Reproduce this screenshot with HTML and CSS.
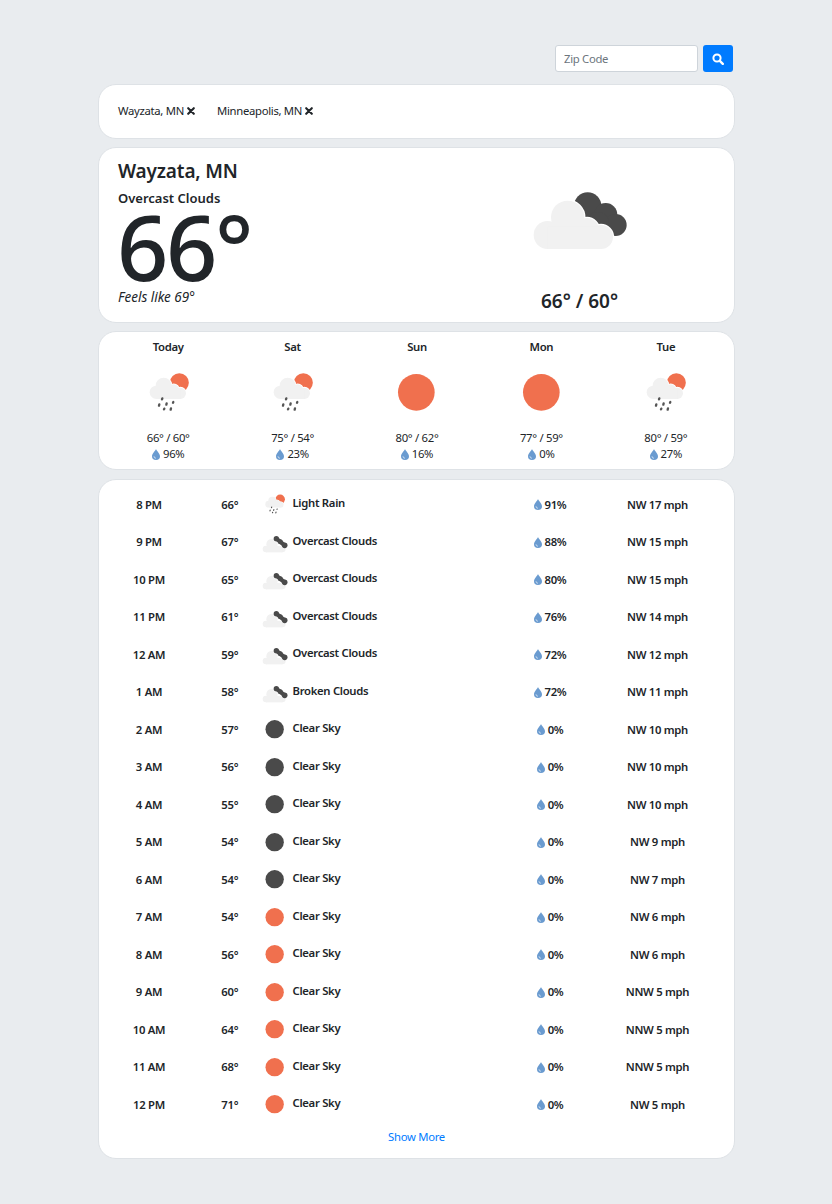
FILE: index.html
```html
<!DOCTYPE html>
<html lang="en">
<head>
    <meta charset="UTF-8">
    <meta name="viewport" content="width=device-width, initial-scale=1.0">
    <title>Weather</title>
    <link rel="stylesheet" href="styles.css">
</head>
<body>
    <svg class="defs" width="0" height="0">
        <defs>
            <g id="big-cloud">
                <circle cx="112" cy="195" r="42"/><circle cx="172" cy="142" r="50"/><circle cx="230" cy="180" r="36"/><circle cx="272" cy="201" r="36"/><rect x="112" y="170" width="160" height="67"/>
            </g>
            <g id="rain-cloud">
                <circle cx="46" cy="67" r="20"/><circle cx="68" cy="47" r="24"/><circle cx="98" cy="59" r="16"/><circle cx="118" cy="70" r="17"/><rect x="46" y="60" width="72" height="27"/>
            </g>
            <symbol id="i-overcast" viewBox="14 0 390 270">
                <g fill="#4a4a4a">
                    <circle cx="232" cy="108" r="41"/><circle cx="286" cy="134" r="35"/><circle cx="316" cy="165" r="33"/><circle cx="262" cy="160" r="34"/>
                </g>
                <use href="#big-cloud" fill="#fff" stroke="#fff" stroke-width="7"/>
                <use href="#big-cloud" fill="#f1f1f1"/>
            </symbol>
            <symbol id="i-rain" viewBox="0 0 165 165">
                <circle cx="115" cy="38" r="28.500" fill="#f0704e"/>
                <use href="#rain-cloud" fill="#fff" stroke="#fff" stroke-width="5"/>
                <use href="#rain-cloud" fill="#f1f1f1"/>
                <path d="M64 85l-1 3M55 103l-1 4M77 100l-1 4M97 96l-1 2M70 116l-1 2M90 115l-1 4" stroke="#555" stroke-width="7" stroke-linecap="round"/>
            </symbol>
            <symbol id="i-sun" viewBox="0 0 165 165">
                <circle cx="82" cy="67" r="55" fill="#f0704e"/>
            </symbol>
            <symbol id="i-moon" viewBox="0 0 165 165">
                <circle cx="82" cy="67" r="55" fill="#4a4a4a"/>
            </symbol>
            <symbol id="i-cloud-small" viewBox="0 0 165 165">
                <g fill="#f1f1f1">
                    <circle cx="30" cy="108" r="20"/><circle cx="66" cy="80" r="34"/><circle cx="128" cy="108" r="20"/><rect x="30" y="90" width="98" height="38"/>
                </g>
                <path d="M92 46L142 86" stroke="#4a4a4a" stroke-width="24"/>
                <g fill="#4a4a4a">
                    <circle cx="92" cy="46" r="16"/><circle cx="116" cy="64" r="15"/><circle cx="142" cy="86" r="17"/>
                </g>
            </symbol>
            <symbol id="i-drop" viewBox="0 0 16 22">
                <path d="M8 0C7 3 0 9 0 14.500A8 7.500 0 0 0 16 14.500C16 9 9 3 8 0Z" fill="#6a9bd0"/>
                <path d="M4 14.500a4 4 0 0 0 4 4" fill="none" stroke="#dbe7f4" stroke-width="1.600"/>
            </symbol>
            <symbol id="i-close" viewBox="0 0 10 10">
                <path d="M1.500 1.500l7 7M8.500 1.500l-7 7" stroke="#212529" stroke-width="2.600" stroke-linecap="round"/>
            </symbol>
        </defs>
    </svg>

    <div class="container">
        <div class="search">
            <input class="zip" type="text" placeholder="Zip Code">
            <button class="search-btn" type="button" aria-label="Search">
                <svg width="12" height="12" viewBox="0 0 12 12"><circle cx="5" cy="5" r="3.600" fill="none" stroke="#fff" stroke-width="2"/><path d="M7.800 7.800l3 3" stroke="#fff" stroke-width="2.400" stroke-linecap="round"/></svg>
            </button>
        </div>

        <div class="card saved">
            <span class="place">Wayzata, MN <svg class="close"><use href="#i-close"/></svg></span>
            <span class="place">Minneapolis, MN <svg class="close"><use href="#i-close"/></svg></span>
        </div>

        <div class="card current">
            <div class="current-left">
                <h1 class="city">Wayzata, MN</h1>
                <div class="desc">Overcast Clouds</div>
                <div class="temp">66°</div>
                <div class="feels">Feels like 69°</div>
            </div>
            <div class="current-right">
                <svg class="big-icon"><use href="#i-overcast"/></svg>
                <div class="hilo">66° / 60°</div>
            </div>
        </div>

        <div class="card days">
            <div class="day">
                <div class="day-name">Today</div>
                <svg class="day-icon"><use href="#i-rain"/></svg>
                <div>66° / 60°</div>
                <div class="precip"><svg class="drop"><use href="#i-drop"/></svg>96%</div>
            </div>
            <div class="day">
                <div class="day-name">Sat</div>
                <svg class="day-icon"><use href="#i-rain"/></svg>
                <div>75° / 54°</div>
                <div class="precip"><svg class="drop"><use href="#i-drop"/></svg>23%</div>
            </div>
            <div class="day">
                <div class="day-name">Sun</div>
                <svg class="day-icon"><use href="#i-sun"/></svg>
                <div>80° / 62°</div>
                <div class="precip"><svg class="drop"><use href="#i-drop"/></svg>16%</div>
            </div>
            <div class="day">
                <div class="day-name">Mon</div>
                <svg class="day-icon"><use href="#i-sun"/></svg>
                <div>77° / 59°</div>
                <div class="precip"><svg class="drop"><use href="#i-drop"/></svg>0%</div>
            </div>
            <div class="day">
                <div class="day-name">Tue</div>
                <svg class="day-icon"><use href="#i-rain"/></svg>
                <div>80° / 59°</div>
                <div class="precip"><svg class="drop"><use href="#i-drop"/></svg>27%</div>
            </div>
        </div>

        <div class="card hours">
            <div class="hour"><div>8 PM</div><div>66°</div><svg class="hour-icon"><use href="#i-rain"/></svg><div class="label">Light Rain</div><div class="precip"><svg class="drop"><use href="#i-drop"/></svg>91%</div><div>NW 17 mph</div></div>
            <div class="hour"><div>9 PM</div><div>67°</div><svg class="hour-icon"><use href="#i-cloud-small"/></svg><div class="label">Overcast Clouds</div><div class="precip"><svg class="drop"><use href="#i-drop"/></svg>88%</div><div>NW 15 mph</div></div>
            <div class="hour"><div>10 PM</div><div>65°</div><svg class="hour-icon"><use href="#i-cloud-small"/></svg><div class="label">Overcast Clouds</div><div class="precip"><svg class="drop"><use href="#i-drop"/></svg>80%</div><div>NW 15 mph</div></div>
            <div class="hour"><div>11 PM</div><div>61°</div><svg class="hour-icon"><use href="#i-cloud-small"/></svg><div class="label">Overcast Clouds</div><div class="precip"><svg class="drop"><use href="#i-drop"/></svg>76%</div><div>NW 14 mph</div></div>
            <div class="hour"><div>12 AM</div><div>59°</div><svg class="hour-icon"><use href="#i-cloud-small"/></svg><div class="label">Overcast Clouds</div><div class="precip"><svg class="drop"><use href="#i-drop"/></svg>72%</div><div>NW 12 mph</div></div>
            <div class="hour"><div>1 AM</div><div>58°</div><svg class="hour-icon"><use href="#i-cloud-small"/></svg><div class="label">Broken Clouds</div><div class="precip"><svg class="drop"><use href="#i-drop"/></svg>72%</div><div>NW 11 mph</div></div>
            <div class="hour"><div>2 AM</div><div>57°</div><svg class="hour-icon"><use href="#i-moon"/></svg><div class="label">Clear Sky</div><div class="precip"><svg class="drop"><use href="#i-drop"/></svg>0%</div><div>NW 10 mph</div></div>
            <div class="hour"><div>3 AM</div><div>56°</div><svg class="hour-icon"><use href="#i-moon"/></svg><div class="label">Clear Sky</div><div class="precip"><svg class="drop"><use href="#i-drop"/></svg>0%</div><div>NW 10 mph</div></div>
            <div class="hour"><div>4 AM</div><div>55°</div><svg class="hour-icon"><use href="#i-moon"/></svg><div class="label">Clear Sky</div><div class="precip"><svg class="drop"><use href="#i-drop"/></svg>0%</div><div>NW 10 mph</div></div>
            <div class="hour"><div>5 AM</div><div>54°</div><svg class="hour-icon"><use href="#i-moon"/></svg><div class="label">Clear Sky</div><div class="precip"><svg class="drop"><use href="#i-drop"/></svg>0%</div><div>NW 9 mph</div></div>
            <div class="hour"><div>6 AM</div><div>54°</div><svg class="hour-icon"><use href="#i-moon"/></svg><div class="label">Clear Sky</div><div class="precip"><svg class="drop"><use href="#i-drop"/></svg>0%</div><div>NW 7 mph</div></div>
            <div class="hour"><div>7 AM</div><div>54°</div><svg class="hour-icon"><use href="#i-sun"/></svg><div class="label">Clear Sky</div><div class="precip"><svg class="drop"><use href="#i-drop"/></svg>0%</div><div>NW 6 mph</div></div>
            <div class="hour"><div>8 AM</div><div>56°</div><svg class="hour-icon"><use href="#i-sun"/></svg><div class="label">Clear Sky</div><div class="precip"><svg class="drop"><use href="#i-drop"/></svg>0%</div><div>NW 6 mph</div></div>
            <div class="hour"><div>9 AM</div><div>60°</div><svg class="hour-icon"><use href="#i-sun"/></svg><div class="label">Clear Sky</div><div class="precip"><svg class="drop"><use href="#i-drop"/></svg>0%</div><div>NNW 5 mph</div></div>
            <div class="hour"><div>10 AM</div><div>64°</div><svg class="hour-icon"><use href="#i-sun"/></svg><div class="label">Clear Sky</div><div class="precip"><svg class="drop"><use href="#i-drop"/></svg>0%</div><div>NNW 5 mph</div></div>
            <div class="hour"><div>11 AM</div><div>68°</div><svg class="hour-icon"><use href="#i-sun"/></svg><div class="label">Clear Sky</div><div class="precip"><svg class="drop"><use href="#i-drop"/></svg>0%</div><div>NNW 5 mph</div></div>
            <div class="hour"><div>12 PM</div><div>71°</div><svg class="hour-icon"><use href="#i-sun"/></svg><div class="label">Clear Sky</div><div class="precip"><svg class="drop"><use href="#i-drop"/></svg>0%</div><div>NW 5 mph</div></div>
            <a class="more" href="#">Show More</a>
        </div>
    </div>
</body>
</html>
```

FILE: styles.css
```css
* {
    box-sizing: border-box;
}
body {
    margin: 0;
    background-color: #e9ecef;
    color: #212529;
    font-family: "Noto Sans", "Open Sans", Arial, sans-serif;
    font-size: 11.3px;
    letter-spacing: -0.3px;
    line-height: 16px;
}
.defs {
    position: absolute;
}
.container {
    width: 637px;
    margin: 0 97px 0 98px;
    padding: 45px 0 45px;
}
.search {
    display: flex;
    justify-content: flex-end;
    gap: 5px;
    padding-right: 2px;
    margin-bottom: 12px;
}
.zip {
    width: 143px;
    height: 27px;
    padding: 0 8px;
    border: 1px solid #ced4da;
    border-radius: 3px;
    font: inherit;
    letter-spacing: inherit;
    background: white;
}
.zip::placeholder {
    color: #6c757d;
}
.search-btn {
    display: flex;
    align-items: center;
    justify-content: center;
    width: 30px;
    height: 27px;
    padding: 0;
    border: none;
    border-radius: 3px;
    background-color: #007bff;
}
.card {
    background: white;
    border: 1px solid #dee2e6;
    border-radius: 18px;
    margin-bottom: 8px;
}
.saved {
    display: flex;
    align-items: center;
    gap: 22px;
    height: 55px;
    padding: 0 19px 1px;
}
.place {
    display: flex;
    align-items: center;
    gap: 3px;
}
.close {
    width: 8px;
    height: 8px;
}
.current {
    display: flex;
    height: 176px;
}
.current-left {
    width: 326px;
    padding: 11px 0 0 19px;
}
.city {
    margin: 0;
    font-size: 19px;
    letter-spacing: -0.15px;
    line-height: 24px;
    font-weight: 600;
}
.desc {
    margin-top: 6px;
    font-size: 13px;
    letter-spacing: 0;
    line-height: 18px;
    font-weight: 600;
}
.temp {
    height: 78px;
    font-size: 90px;
    font-weight: 500;
    letter-spacing: -2.500px;
    line-height: 78px;
    margin-left: -1px;
}
.feels {
    margin-top: 3px;
    font-size: 13.500px;
    letter-spacing: 0;
    line-height: 18px;
    font-style: italic;
}
.current-right {
    width: 309px;
    display: flex;
    flex-direction: column;
    align-items: center;
    padding-top: 22px;
}
.big-icon {
    width: 130px;
    height: 90px;
    flex: none;
}
.hilo {
    margin-top: 29px;
    font-size: 19px;
    letter-spacing: 0;
    line-height: 24px;
    font-weight: 600;
}
.days {
    display: grid;
    grid-template-columns: repeat(5, 1fr);
    height: 139px;
    padding: 7px 6px 0 7px;
    margin-bottom: 9px;
    text-align: center;
}
.day-name {
    font-weight: 600;
}
.day-icon {
    display: block;
    width: 55px;
    height: 55px;
    margin: 15px auto 5px;
}
.precip {
    display: flex;
    align-items: center;
    justify-content: center;
    gap: 3px;
}
.drop {
    width: 8px;
    height: 11px;
}
.hours {
    height: 680px;
    padding-top: 6px;
    margin-bottom: 0;
    text-align: center;
}
.hour {
    display: grid;
    grid-template-columns: 100px 61.500px 28px 211.500px 100px 115px;
    align-items: center;
    height: 37.500px;
    font-weight: 600;
}
.hour-icon {
    width: 27.500px;
    height: 27.500px;
    margin-top: 4px;
}
.label {
    text-align: left;
    padding-left: 4px;
    padding-bottom: 3.400px;
}
.more {
    display: block;
    margin-top: 5px;
    color: #007bff;
    text-decoration: none;
}
```
